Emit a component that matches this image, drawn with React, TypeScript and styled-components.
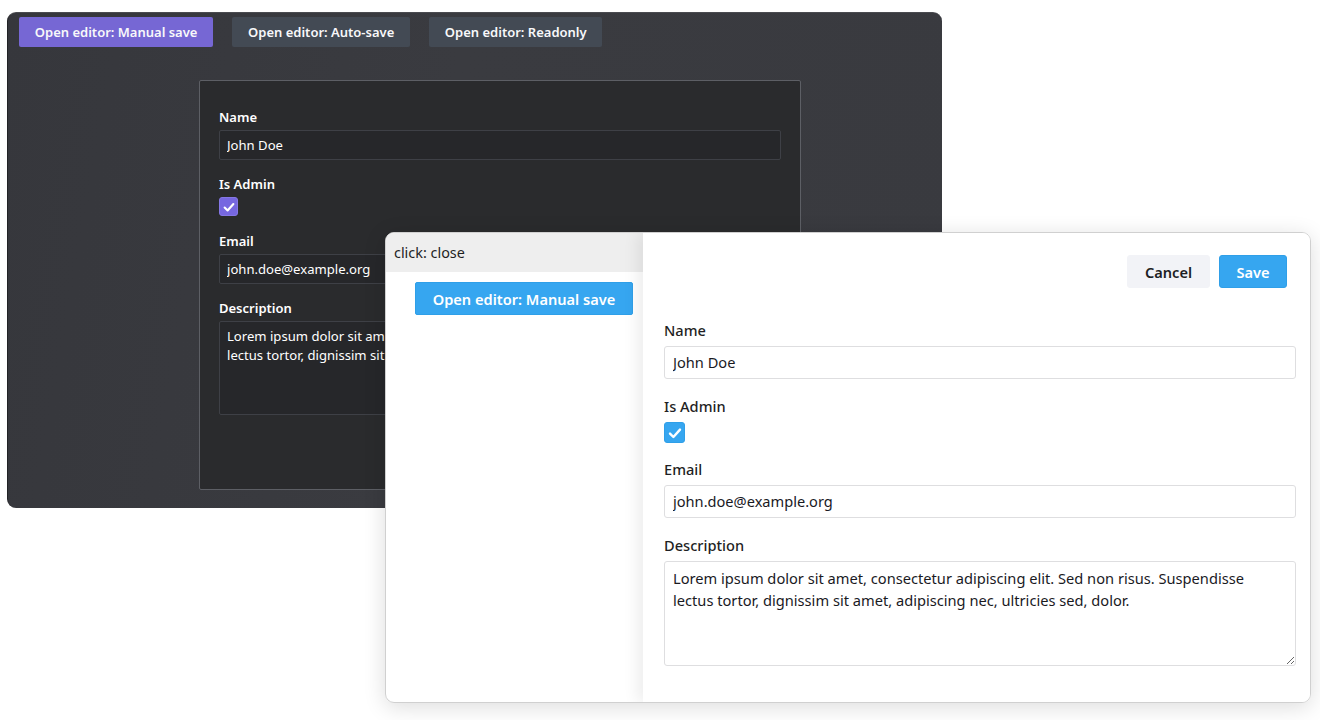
import React from 'react';
import styled, { createGlobalStyle } from 'styled-components';

const LOREM =
  'Lorem ipsum dolor sit amet, consectetur adipiscing elit. Sed non risus. Suspendisse lectus tortor, dignissim sit amet, adipiscing nec, ultricies sed, dolor.';

const GlobalStyle = createGlobalStyle`
  html, body {
    margin: 0;
    padding: 0;
    background: #ffffff;
    font-family: 'Noto Sans', 'Open Sans', sans-serif;
  }
  * {
    box-sizing: border-box;
  }
`;

const Desktop = styled.div`
  position: relative;
  width: 1320px;
  height: 720px;
  overflow: hidden;
`;

const DarkWindow = styled.section`
  position: absolute;
  left: 7px;
  top: 12px;
  width: 935px;
  height: 496px;
  display: flex;
  flex-direction: column;
  background: linear-gradient(100deg, #36373c 0%, #3a3b40 45%, #393a3f 100%);
  border-radius: 9px;
  border-left: 1px solid #222326;
  border-top: 1px solid #4a4b50;
`;

const Toolbar = styled.div`
  display: flex;
  gap: 19px;
  padding: 4px 11px;
`;

const DarkButton = styled.button<{ $primary?: boolean }>`
  height: 30px;
  padding: 0 15.8px;
  border: none;
  border-radius: 2px;
  background: ${(p) => (p.$primary ? '#7667d4' : '#434a54')};
  color: #f8f8fa;
  font: 600 13px 'Noto Sans', sans-serif;
`;

const DarkPanel = styled.div`
  width: 602px;
  height: 410px;
  margin: 29px 0 0 191px;
  padding: 28px 19px 0;
  background: #2a2b2d;
  border: 1px solid #5d5f65;
  border-radius: 2px;
  display: flex;
  flex-direction: column;
`;

const DarkLabel = styled.label`
  display: block;
  height: 17px;
  line-height: 17px;
  margin-bottom: 4px;
  color: #ffffff;
  font-size: 13px;
  font-weight: 600;
`;

const DarkField = styled.div<{ $gap: number }>`
  margin-bottom: ${(p) => p.$gap}px;
`;

const DarkInput = styled.input`
  display: block;
  width: 100%;
  height: 30px;
  padding: 0 7px;
  background: #26272a;
  border: 1px solid #3e4046;
  border-radius: 2px;
  color: #ffffff;
  font: 400 13.1px 'Noto Sans', sans-serif;
  outline: none;
`;

const DarkTextarea = styled.textarea`
  display: block;
  width: 100%;
  height: 94px;
  padding: 5px 7px;
  background: #26272a;
  border: 1px solid #3e4046;
  border-radius: 2px;
  color: #ffffff;
  font: 400 13.1px/19px 'Noto Sans', sans-serif;
  outline: none;
  resize: none;
`;

const Check = styled.span<{ $size: number; $color: string; $edge: string }>`
  display: flex;
  align-items: center;
  justify-content: center;
  width: ${(p) => p.$size}px;
  height: ${(p) => p.$size}px;
  background: ${(p) => p.$color};
  border: 1px solid ${(p) => p.$edge};
  border-radius: 3px;
  color: #ffffff;
`;

const ShadowCaster = styled.div`
  position: absolute;
  left: 385px;
  top: 232px;
  width: 926px;
  height: 471px;
  border-radius: 9px;
  box-shadow: 0 4px 22px rgba(0, 0, 0, 0.14);
`;

const LightWindow = styled.section`
  position: absolute;
  left: 385px;
  top: 232px;
  width: 926px;
  height: 471px;
  display: flex;
  background: #ffffff;
  border: 1px solid #d0d0d0;
  border-radius: 9px;
  overflow: hidden;
`;

const SidePane = styled.aside`
  width: 257px;
  flex: none;
  display: flex;
  flex-direction: column;
`;

const CloseBar = styled.div`
  height: 39px;
  padding: 0 8px;
  display: flex;
  align-items: center;
  background: #eeeeee;
  color: #1f1f1f;
  font-size: 14.4px;
`;

const SideButton = styled.button`
  align-self: flex-end;
  width: 218px;
  height: 33px;
  margin: 10px 10px 0 0;
  border: 1px solid #2f9fe8;
  border-radius: 2px;
  background: #36a6f0;
  color: #ffffff;
  font: 600 14.6px 'Noto Sans', sans-serif;
`;

const EditorPane = styled.div`
  flex: 1;
  min-width: 0;
  padding: 22px 14px 0 21px;
  background: #ffffff;
  box-shadow: -6px 0 14px rgba(0, 0, 0, 0.07);
`;

const EditorActions = styled.div`
  display: flex;
  justify-content: flex-end;
  gap: 9px;
  margin-right: 9px;
  margin-bottom: 33px;
`;

const ActionButton = styled.button<{ $primary?: boolean }>`
  height: 33px;
  padding: 0;
  width: ${(p) => (p.$primary ? 68 : 83)}px;
  border: 1px solid ${(p) => (p.$primary ? '#2f9fe8' : '#f2f3f7')};
  border-radius: 3px;
  background: ${(p) => (p.$primary ? '#36a6f0' : '#f2f3f7')};
  color: ${(p) => (p.$primary ? '#ffffff' : '#1d1e24')};
  font: 600 14.6px 'Noto Sans', sans-serif;
`;

const LightField = styled.div<{ $gap: number }>`
  margin-bottom: ${(p) => p.$gap}px;
`;

const LightLabel = styled.label`
  display: block;
  height: 20px;
  line-height: 19px;
  margin-bottom: 5px;
  color: #1f1f24;
  font-size: 14.6px;
  font-weight: 500;
`;

const LightInput = styled.input`
  display: block;
  width: 100%;
  height: 33px;
  padding: 0 8px 2px;
  background: #ffffff;
  border: 1px solid #dedee0;
  border-radius: 3px;
  color: #1a1a1f;
  font: 400 14.6px 'Noto Sans', sans-serif;
  outline: none;
`;

const LightTextarea = styled.textarea`
  display: block;
  width: 100%;
  height: 105px;
  padding: 5px 8px;
  background: #ffffff;
  border: 1px solid #dedee0;
  border-radius: 3px;
  color: #1a1a1f;
  font: 400 14.65px/22px 'Noto Sans', sans-serif;
  outline: none;
  resize: vertical;
`;

function CheckMark({ size }: { size: number }) {
  return (
    <svg width={size} height={size} viewBox="0 0 16 16" fill="none">
      <path d="M3 8.6 6.4 12 13 4.6" stroke="currentColor" strokeWidth="2.4" strokeLinecap="round" strokeLinejoin="round" />
    </svg>
  );
}

function DarkEditor() {
  return (
    <DarkWindow>
      <Toolbar>
        <DarkButton $primary>Open editor: Manual save</DarkButton>
        <DarkButton>Open editor: Auto-save</DarkButton>
        <DarkButton>Open editor: Readonly</DarkButton>
      </Toolbar>
      <DarkPanel>
        <DarkField $gap={16}>
          <DarkLabel>Name</DarkLabel>
          <DarkInput readOnly value="John Doe" />
        </DarkField>
        <DarkField $gap={17}>
          <DarkLabel>Is Admin</DarkLabel>
          <Check $size={19} $color="#7667e0" $edge="#8577e6">
            <CheckMark size={14} />
          </Check>
        </DarkField>
        <DarkField $gap={16}>
          <DarkLabel>Email</DarkLabel>
          <DarkInput readOnly value="john.doe@example.org" />
        </DarkField>
        <DarkField $gap={16}>
          <DarkLabel>Description</DarkLabel>
          <DarkTextarea readOnly value={LOREM} />
        </DarkField>
      </DarkPanel>
    </DarkWindow>
  );
}

function LightEditor() {
  return (
    <LightWindow>
      <SidePane>
        <CloseBar>click: close</CloseBar>
        <SideButton>Open editor: Manual save</SideButton>
      </SidePane>
      <EditorPane>
        <EditorActions>
          <ActionButton>Cancel</ActionButton>
          <ActionButton $primary>Save</ActionButton>
        </EditorActions>
        <LightField $gap={18}>
          <LightLabel>Name</LightLabel>
          <LightInput readOnly value="John Doe" />
        </LightField>
        <LightField $gap={17}>
          <LightLabel>Is Admin</LightLabel>
          <Check $size={21} $color="#36a6f0" $edge="#2f9fe8">
            <CheckMark size={16} />
          </Check>
        </LightField>
        <LightField $gap={18}>
          <LightLabel>Email</LightLabel>
          <LightInput readOnly value="john.doe@example.org" />
        </LightField>
        <LightField $gap={18}>
          <LightLabel>Description</LightLabel>
          <LightTextarea readOnly value={LOREM} />
        </LightField>
      </EditorPane>
    </LightWindow>
  );
}

export default function App() {
  return (
    <Desktop>
      <GlobalStyle />
      <DarkEditor />
      <ShadowCaster />
      <LightEditor />
    </Desktop>
  );
}
